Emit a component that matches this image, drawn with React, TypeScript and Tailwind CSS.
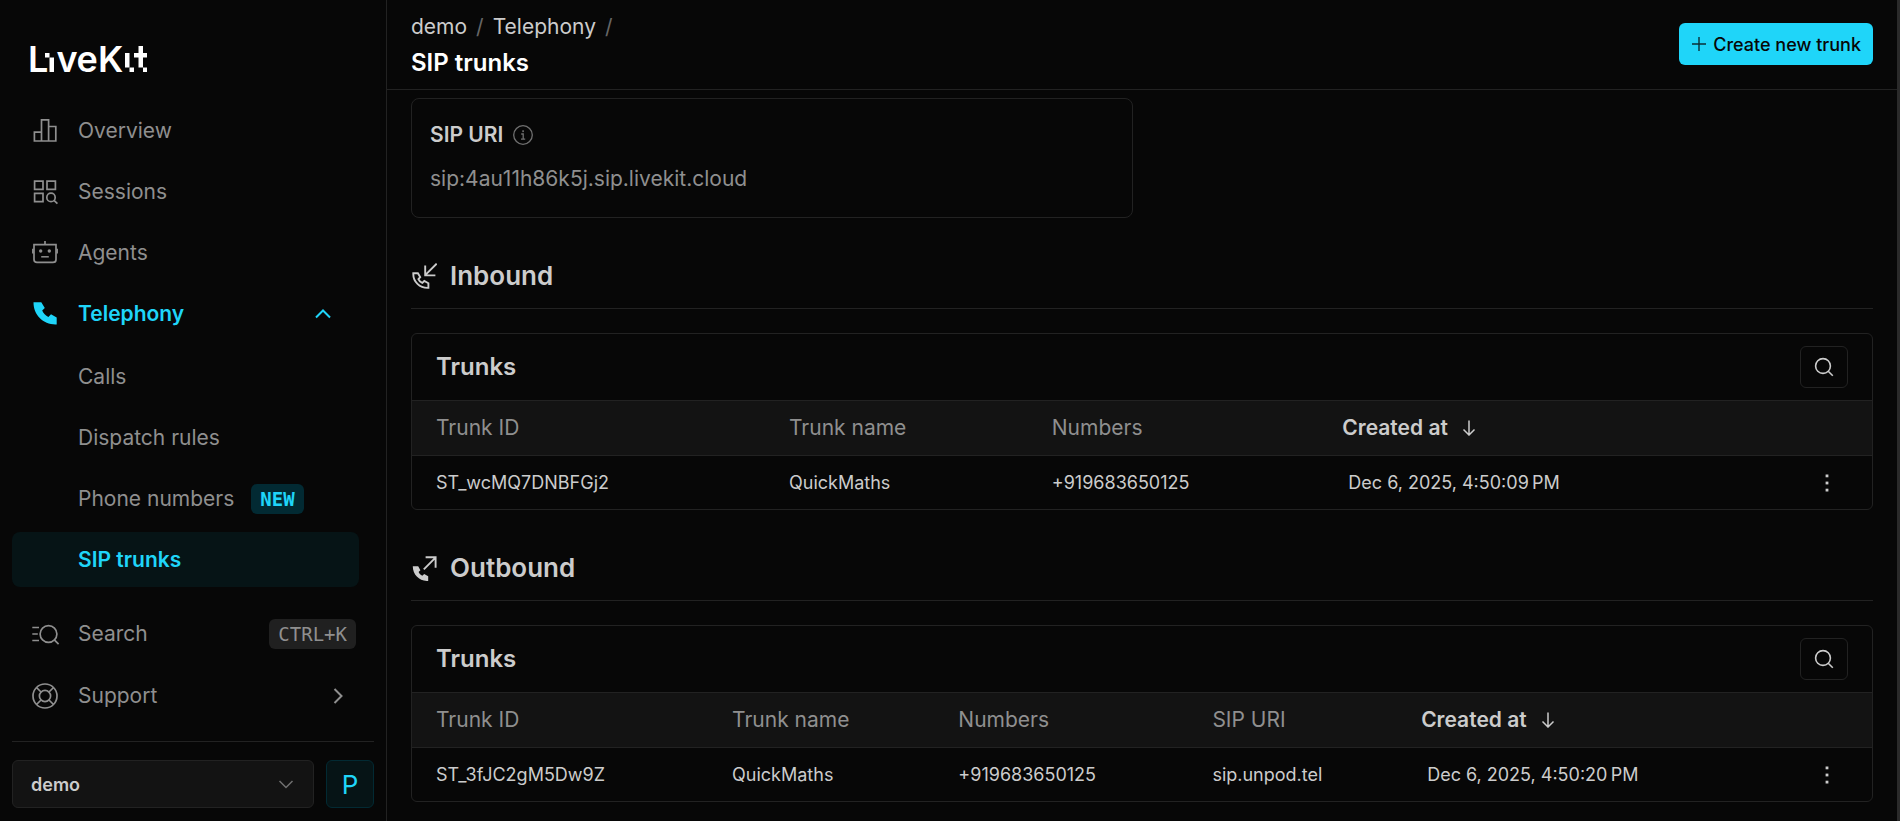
import type { ReactNode } from "react";

type IconProps = { children: ReactNode; className?: string };

function Glyph({ children, className = "size-[26px]" }: IconProps) {
  return (
    <svg
      viewBox="0 0 26 26"
      fill="none"
      stroke="currentColor"
      strokeWidth="1.7"
      aria-hidden="true"
      className={`shrink-0 ${className}`}
    >
      {children}
    </svg>
  );
}

const OverviewIcon = () => (
  <Glyph>
    <path d="M2.4 14.2H9.5V23H2.4ZM9.5 1.9H16.6V23H9.5ZM16.6 8.5H23.8V23H16.6Z" />
  </Glyph>
);

const SessionsIcon = () => (
  <Glyph>
    <path d="M2.6 2.2H11V10.4H2.6ZM15 2.2H23.4V10.4H15ZM2.6 14.4H11V22.6H2.6Z" />
    <circle cx="19" cy="18.4" r="4.2" />
    <path d="M22 21.4L25.4 24.6" />
  </Glyph>
);

const AgentsIcon = () => (
  <Glyph>
    <path d="M2 4.6H24V19.4Q24 22.4 21 22.4H5Q2 22.4 2 19.4Z" />
    <path d="M13 1V4.6M.9 8.8V13.4M25.1 8.8V13.4" />
    <path d="M9.2 16.8H16.8" strokeWidth="1.5" />
    <circle cx="8.7" cy="11" r="1.7" fill="currentColor" stroke="none" />
    <circle cx="17.3" cy="11" r="1.7" fill="currentColor" stroke="none" />
  </Glyph>
);

const PhoneIcon = () => (
  <Glyph>
    <path
      d="M1.5 1.3H9.3L12.8 7.1L10.2 9.6C11.3 12.4 13.6 14.8 16.4 15.9L19 13.3L24.7 16.5V23.5C11.8 24.2 1.3 14.2 1.5 1.3Z"
      fill="currentColor"
      stroke="none"
    />
  </Glyph>
);

const SearchMenuIcon = () => (
  <Glyph className="size-[26px] overflow-visible">
    <path d="M.3 6.5H7M.3 13H5.8M.3 19.5H7" />
    <circle cx="16.5" cy="13" r="8.4" />
    <path d="M22.3 18.8L26.6 23.1" />
  </Glyph>
);

const SupportIcon = () => (
  <Glyph>
    <circle cx="13" cy="13" r="12" />
    <circle cx="13" cy="13" r="5.6" />
    <path d="M4.5 4.5L9 9M17 17L21.5 21.5M21.5 4.5L17 9M9 17L4.5 21.5" />
  </Glyph>
);

const InboundIcon = () => (
  <Glyph>
    <path d="M25.7 .6L14.2 12.1M14.2 2.4V12.4H24.4" strokeWidth="1.9" />
    <path
      d="M2.3 10.2H6.9L9.2 14.1L7.4 16.1C8.1 17.8 9.6 19.2 11.3 19.9L13.3 18L17.4 20.2V24.9C8.8 25.3 1.9 18.7 2.3 10.2Z"
      strokeWidth="1.9"
    />
  </Glyph>
);

const OutboundIcon = () => (
  <Glyph>
    <path d="M12.8 14.3L24.5 2.6M14.6 2.3H24.6V12.8" strokeWidth="1.9" />
    <path
      d="M1.8 11.2H7.2L9.4 15.2L7.6 17.1C8.4 18.8 9.6 20 11.3 20.8L13.2 19L17.2 21.2V26C8.6 26.4 1.6 19.6 1.8 11.2Z"
      fill="currentColor"
      stroke="none"
    />
  </Glyph>
);

const Chevron = ({ d, className }: { d: string; className: string }) => (
  <svg viewBox="0 0 16 16" fill="none" stroke="currentColor" aria-hidden="true" className={className}>
    <path d={d} />
  </svg>
);

function Logo() {
  return (
    <svg
      viewBox="-4 -9 126 46"
      role="img"
      aria-label="LiveKit"
      fill="white"
      className="h-[46px] w-[126px] font-['Inter',sans-serif] text-[36px] font-semibold"
    >
      <text x="-2" y="27">L</text>
      <rect x="15" y="8" width="4.5" height="4.5" />
      <rect x="19.5" y="12.5" width="4.5" height="14.5" />
      <text x="26.5" y="27">v</text>
      <text x="46.5" y="27">e</text>
      <text x="68" y="27">K</text>
      <rect x="95" y="8" width="4.5" height="14.5" />
      <rect x="99.5" y="22.5" width="4.5" height="4.5" />
      <rect x="108.5" y="1" width="4.5" height="21.5" />
      <rect x="104" y="8" width="13" height="4.5" />
      <rect x="113" y="22.5" width="4" height="4.5" />
    </svg>
  );
}

const rowClass = "flex h-[55px] w-full items-center rounded-lg pl-5";

function NavLink({ icon, label }: { icon: ReactNode; label: string }) {
  return (
    <a href="#" className={`${rowClass} gap-5`}>
      {icon}
      {label}
    </a>
  );
}

function Sidebar() {
  return (
    <aside className="flex w-[387px] shrink-0 flex-col border-r border-[#222] px-3 pb-[13px] text-[21px] text-[#8f8f8f]">
      <a href="#" className="mt-9 ml-3.5 w-fit">
        <Logo />
      </a>
      <nav className="mt-[21px] flex flex-1 flex-col gap-1.5 pr-[15px]">
        <NavLink icon={<OverviewIcon />} label="Overview" />
        <NavLink icon={<SessionsIcon />} label="Sessions" />
        <NavLink icon={<AgentsIcon />} label="Agents" />
        <button type="button" aria-expanded="true" className={`${rowClass} gap-5 pr-7 font-semibold text-[#1fd5f9]`}>
          <PhoneIcon />
          <span className="flex-1 text-left">Telephony</span>
          <Chevron d="M1 11.5L8 4.5L15 11.5" className="size-4 stroke-2" />
        </button>
        <div className="flex flex-col gap-1.5 pt-0.5">
          <a href="#" className={`${rowClass} pl-[66px]`}>Calls</a>
          <a href="#" className={`${rowClass} pl-[66px]`}>Dispatch rules</a>
          <a href="#" className={`${rowClass} gap-[17px] pl-[66px]`}>
            Phone numbers
            <span className="rounded-md bg-[#022a33] px-[9px] font-['DejaVu_Sans_Mono',monospace] text-[19px] leading-[30px] font-bold text-[#1fd5f9]">
              NEW
            </span>
          </a>
          <a href="#" aria-current="page" className={`${rowClass} bg-[#061416] pl-[66px] font-semibold text-[#1fd5f9]`}>
            SIP trunks
          </a>
        </div>
      </nav>
      <div className="flex flex-col gap-[7px] pb-[18px]">
        <button type="button" className={`${rowClass} gap-5 pr-[18px]`}>
          <SearchMenuIcon />
          <span className="flex-1 text-left">Search</span>
          <kbd className="rounded-md bg-[#202020] px-[9px] font-['DejaVu_Sans_Mono',monospace] text-[19px] leading-[30px]">
            CTRL+K
          </kbd>
        </button>
        <button type="button" className={`${rowClass} gap-5 pr-7`}>
          <SupportIcon />
          <span className="flex-1 text-left">Support</span>
          <Chevron d="M4.5 1L11.5 8L4.5 15" className="size-4 stroke-2" />
        </button>
      </div>
      <div className="flex gap-3 border-t border-[#222] pt-[18px]">
        <div className="relative flex-1">
          <select
            aria-label="Project"
            className="h-12 w-full appearance-none rounded-md border border-[#222] bg-[#131313] pl-[18px] text-[18px] font-semibold text-[#ccc]"
          >
            <option>demo</option>
          </select>
          <Chevron
            d="M1.5 5L8 11.5L14.5 5"
            className="pointer-events-none absolute top-4 right-5 size-4 stroke-[1.5] text-[#707070]"
          />
        </div>
        <button
          type="button"
          aria-label="Account P"
          className="size-12 rounded-md border border-[#022a33] bg-[#061416] text-[26px] text-[#1fd5f9]"
        >
          P
        </button>
      </div>
    </aside>
  );
}

type Column = { label: string; width: string };
type TrunkTableProps = { id: string; columns: Column[]; cells: string[]; created: string; lastWidth: string };

function TrunkTable({ id, columns, cells, created, lastWidth }: TrunkTableProps) {
  return (
    <div className="mt-6 overflow-hidden rounded-md border border-[#222]">
      <div className="flex h-[67px] items-center justify-between border-b border-[#222] px-6">
        <h3 id={id} className="text-[24px] font-semibold">Trunks</h3>
        <button
          type="button"
          aria-label="Search trunks"
          className="flex h-[42px] w-12 items-center justify-center rounded-md border border-[#222]"
        >
          <svg viewBox="0 0 20 20" fill="none" stroke="currentColor" strokeWidth="1.6" aria-hidden="true" className="size-5">
            <circle cx="9" cy="9" r="7.4" />
            <path d="M14.2 14.2L18.8 18.8" />
          </svg>
        </button>
      </div>
      <table aria-labelledby={id} className="w-full table-fixed border-separate border-spacing-0 text-left">
        <thead className="bg-[#131313] text-[21px] text-[#8f8f8f]">
          <tr className="h-[55px]">
            {columns.map((column) => (
              <th
                key={column.label}
                scope="col"
                className={`border-b border-[#222] px-3 font-normal first:pl-6 ${column.width}`}
              >
                {column.label}
              </th>
            ))}
            <th scope="col" aria-sort="descending" className="border-b border-[#222] px-3 font-semibold text-[#ccc]">
              <button type="button" className="flex items-center gap-[14px]">
                Created at
                <svg viewBox="0 0 14 16" fill="none" stroke="currentColor" strokeWidth="1.5" aria-hidden="true" className="h-4 w-[14px]">
                  <path d="M7 .5V15M1.5 9.5L7 15L12.5 9.5" />
                </svg>
              </button>
            </th>
            <th className={`border-b border-[#222] ${lastWidth}`} />
          </tr>
        </thead>
        <tbody className="text-[18px]">
          <tr className="h-[53px]">
            {cells.map((cell) => (
              <td key={cell} className="px-3 first:pl-6">{cell}</td>
            ))}
            <td className="pr-3 pl-[18px]">{created}</td>
            <td className="pr-[33px]">
              <button type="button" aria-label="Trunk actions" className="ml-auto flex w-6 justify-center">
                <svg viewBox="0 0 4 18" fill="currentColor" aria-hidden="true" className="h-[18px] w-1">
                  <rect x=".6" y=".5" width="2.8" height="2.8" />
                  <rect x=".6" y="7.6" width="2.8" height="2.8" />
                  <rect x=".6" y="14.7" width="2.8" height="2.8" />
                </svg>
              </button>
            </td>
          </tr>
        </tbody>
      </table>
    </div>
  );
}

function SectionTitle({ icon, title }: { icon: ReactNode; title: string }) {
  return (
    <div className="flex h-[66px] items-center gap-[13px] border-b border-[#222]">
      {icon}
      <h2 className="text-[26px] font-semibold">{title}</h2>
    </div>
  );
}

export default function App() {
  return (
    <div className="flex min-h-screen bg-[#070707] font-['Inter',sans-serif] text-[#ccc]">
      <Sidebar />
      <div className="flex min-w-0 flex-1 flex-col border-r-[3px] border-[#2a2a2a]">
        <header className="flex h-[90px] items-start justify-between border-b border-[#222] px-6">
          <div className="pt-3">
            <nav aria-label="Breadcrumb" className="flex gap-[9px] text-[21px] leading-[30px]">
              <a href="#">demo</a>
              <span className="text-[#666]">/</span>
              <a href="#">Telephony</a>
              <span className="text-[#666]">/</span>
            </nav>
            <h1 className="pt-[3px] text-[24px] leading-9 font-semibold text-white">SIP trunks</h1>
          </div>
          <button
            type="button"
            className="mt-[23px] flex h-[42px] items-center gap-1.5 rounded-md bg-[#1fd5f9] px-3 text-[18px] font-medium text-[#070707]"
          >
            <svg viewBox="0 0 16 16" stroke="currentColor" strokeWidth="1.4" aria-hidden="true" className="size-4 opacity-80">
              <path d="M8 1V15M1 8H15" />
            </svg>
            Create new trunk
          </button>
        </header>
        <main className="px-6 pt-2 pb-[18px]">
          <div className="grid grid-cols-2 gap-[18px]">
            <section className="h-[120px] rounded-lg border border-[#222] px-[18px] pt-[21px]">
              <h2 className="flex items-center gap-2.5 text-[21px] leading-[30px] font-semibold">
                SIP URI
                <svg viewBox="0 0 20 20" fill="none" stroke="currentColor" strokeWidth="1.3" aria-hidden="true" className="size-5 text-[#707070]">
                  <circle cx="10" cy="10" r="9.3" />
                  <path d="M8.2 9H10.2V14M8 14.2H12.2" />
                  <rect x="9.3" y="5.3" width="1.6" height="1.8" fill="currentColor" stroke="none" />
                </svg>
              </h2>
              <p className="pt-3.5 text-[21px] leading-[30px] text-[#8f8f8f]">sip:4au11h86k5j.sip.livekit.cloud</p>
            </section>
          </div>
          <section className="pt-[25px]">
            <SectionTitle icon={<InboundIcon />} title="Inbound" />
            <TrunkTable
              id="inbound-trunks"
              columns={[
                { label: "Trunk ID", width: "w-[25%]" },
                { label: "Trunk name", width: "w-[18%]" },
                { label: "Numbers", width: "w-[19.9%]" },
              ]}
              cells={["ST_wcMQ7DNBFGj2", "QuickMaths", "+919683650125"]}
              created={"Dec 6, 2025, 4:50:09\u202fPM"}
              lastWidth="w-[18%]"
            />
          </section>
          <section className="pt-[25px]">
            <SectionTitle icon={<OutboundIcon />} title="Outbound" />
            <TrunkTable
              id="outbound-trunks"
              columns={[
                { label: "Trunk ID", width: "w-[21.1%]" },
                { label: "Trunk name", width: "w-[15.5%]" },
                { label: "Numbers", width: "w-[17.4%]" },
                { label: "SIP URI", width: "w-[14.3%]" },
              ]}
              cells={["ST_3fJC2gM5Dw9Z", "QuickMaths", "+919683650125", "sip.unpod.tel"]}
              created={"Dec 6, 2025, 4:50:20\u202fPM"}
              lastWidth="w-[12%]"
            />
          </section>
        </main>
      </div>
    </div>
  );
}
